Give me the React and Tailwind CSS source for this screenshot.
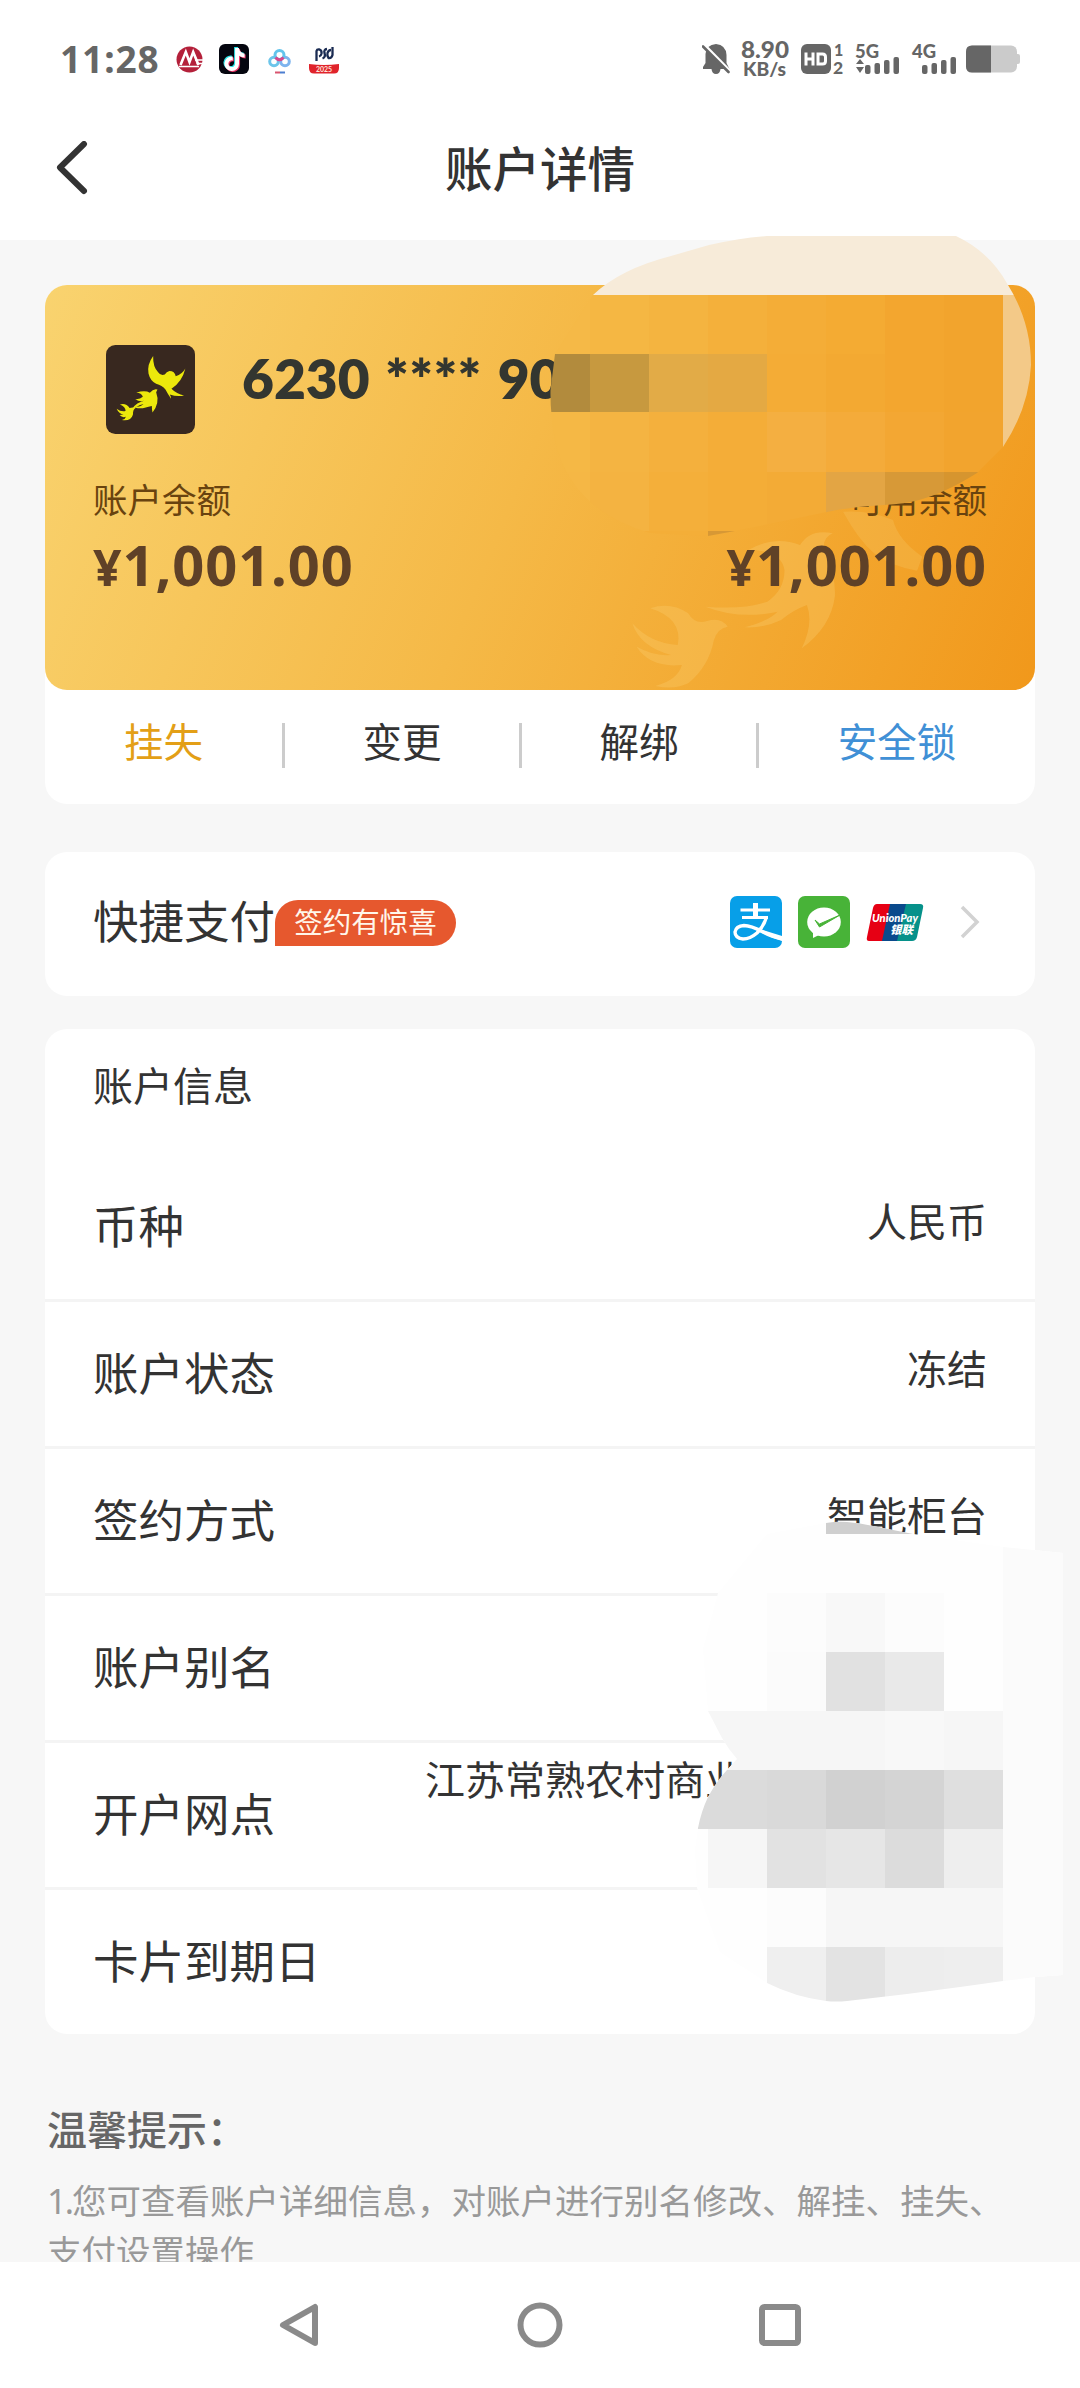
import { FaTiktok } from "react-icons/fa6";

const rows = [
  { label: "币种", value: "人民币" },
  { label: "账户状态", value: "冻结" },
  { label: "签约方式", value: "智能柜台" },
  { label: "账户别名", value: "" },
  { label: "开户网点", value: "江苏常熟农村商业", long: true },
  { label: "卡片到期日", value: "" },
];

// x, y, width, height, colour
const cardTiles = [
  [540, 236, 500, 59, "#f7ebd9"],
  [540, 295, 50, 59, "#f5b947"],
  [590, 295, 59, 59, "#f5b743"],
  [649, 295, 59, 59, "#f4b440"],
  [708, 295, 59, 59, "#f4b03b"],
  [767, 295, 59, 59, "#f4ad37"],
  [826, 295, 59, 59, "#f4ab33"],
  [885, 295, 59, 59, "#f3a62f"],
  [944, 295, 59, 59, "#f2a42d"],
  [540, 354, 50, 58, "#b28b3d"],
  [590, 354, 59, 58, "#c7993f"],
  [649, 354, 59, 58, "#e2ab47"],
  [708, 354, 59, 58, "#e4a943"],
  [767, 354, 59, 58, "#f4ac36"],
  [826, 354, 59, 58, "#f3a932"],
  [885, 354, 59, 58, "#f3a62f"],
  [944, 354, 59, 58, "#f2a42d"],
  [540, 412, 50, 60, "#f5b845"],
  [590, 412, 59, 60, "#f4b442"],
  [649, 412, 59, 60, "#f4b03d"],
  [708, 412, 59, 60, "#f4ad38"],
  [767, 412, 59, 60, "#f4af41"],
  [826, 412, 59, 60, "#f4ab3a"],
  [885, 412, 59, 60, "#f3a733"],
  [944, 412, 59, 60, "#f2a42e"],
  [540, 472, 50, 59, "#f5b745"],
  [590, 472, 59, 59, "#f4b341"],
  [649, 472, 59, 59, "#f4af3a"],
  [708, 472, 59, 59, "#f4ad37"],
  [767, 472, 59, 59, "#f3ab36"],
  [826, 472, 59, 59, "#e3a544"],
  [885, 472, 59, 59, "#d79937"],
  [944, 472, 59, 59, "#d6952f"],
  [640, 531, 68, 6, "#f4ae38"],
  [708, 531, 40, 6, "#d79835"],
  [1003, 295, 40, 160, "#f3c988"],
];

const infoTiles = [
  [690, 1520, 380, 490, "#fefefe"],
  [826, 1520, 100, 14, "#cfcfcf"],
  [767, 1593, 59, 59, "#fcfcfc"],
  [826, 1593, 59, 59, "#f8f8f8"],
  [885, 1593, 59, 59, "#fcfcfc"],
  [767, 1652, 59, 59, "#fbfbfb"],
  [826, 1652, 59, 59, "#e1e1e1"],
  [885, 1652, 59, 59, "#e9e9e9"],
  [690, 1711, 313, 59, "#f6f6f6"],
  [885, 1711, 59, 59, "#f8f8f8"],
  [690, 1770, 77, 59, "#dbdbdb"],
  [767, 1770, 59, 59, "#d9d9d9"],
  [826, 1770, 59, 59, "#d1d1d1"],
  [885, 1770, 59, 59, "#d4d4d4"],
  [944, 1770, 59, 59, "#dfdfdf"],
  [708, 1829, 59, 59, "#f6f6f6"],
  [767, 1829, 59, 59, "#e2e2e2"],
  [826, 1829, 59, 59, "#e6e6e6"],
  [885, 1829, 59, 59, "#dcdcdc"],
  [944, 1829, 59, 59, "#eeeeee"],
  [767, 1888, 59, 59, "#fcfcfc"],
  [826, 1888, 177, 59, "#f6f6f6"],
  [767, 1947, 59, 60, "#efefef"],
  [826, 1947, 59, 60, "#e3e3e3"],
  [885, 1947, 59, 60, "#ededed"],
  [944, 1947, 59, 60, "#eeeeee"],
  [1003, 1530, 60, 470, "#fbfbfb"],
];

function Tiles({ tiles }) {
  return tiles.map(([x, y, w, h, fill]) => (
    <rect key={`${x}-${y}-${w}`} x={x} y={y} width={w} height={h} fill={fill} />
  ));
}

function Redactions() {
  return (
    <svg
      className="pointer-events-none absolute top-0 left-0"
      width="1080"
      height="2388"
      viewBox="0 0 1080 2388"
      shapeRendering="crispEdges"
    >
      <clipPath id="cardBlob">
        <path d="M593 295 Q620 269 671 256 L709 245 Q740 238 767 236 H956 Q990 252 1008 285 Q1031 322 1031 365 Q1029 408 1003 447 L977 473 Q945 493 919 500 Q905 504 884 505 Q850 507 827 512 Q780 522 735 531 L708 536 L650 533 Q570 510 555 440 Q550 412 550.500 390 L555 354 Z" />
      </clipPath>
      <g clipPath="url(#cardBlob)">
        <Tiles tiles={cardTiles} />
      </g>
      <clipPath id="infoBlob">
        <path d="M767 1534 L826 1523 Q838 1521 847 1522 Q860 1523 873 1526 L913 1534 L1003 1547 L1063 1553 V1975 L1035 1977 L1003 1981 L960 1987 L907 1994 L847 2001 Q836 2002 826 2001 Q795 1997 767 1983 L720 1952 L697 1888 L695 1850 L698 1828 Q701 1812 708 1797 Q716 1782 727 1770 L737 1759 Q729 1750 722 1738 L708 1711 L703 1649 L718 1593 Z" />
      </clipPath>
      <g clipPath="url(#infoBlob)">
        <Tiles tiles={infoTiles} />
      </g>
    </svg>
  );
}

function Signal({ label, data }) {
  return (
    <svg className="overflow-visible" width="46" height="34" viewBox="0 0 46 34" fill="#666">
      <text x="0" y="15.500" fontSize="18.500" fontWeight="900" fontFamily="Lato, sans-serif" textLength="24" lengthAdjust="spacingAndGlyphs">
        {label}
      </text>
      {data && <path d="M1 22 L5 17 L9 22 Z M1 25 L5 31 L9 25 Z" />}
      <rect x="10" y="23" width="5.500" height="9" rx="2" />
      <rect x="19.500" y="21" width="5.500" height="11" rx="2" />
      <rect x="29" y="18" width="5.500" height="14" rx="2" />
      <rect x="38.500" y="15" width="5.500" height="17" rx="2" />
    </svg>
  );
}

function StatusBar() {
  return (
    <div className="flex h-[118px] items-center justify-between pr-[60px] pl-[60px]">
      <div className="flex items-center">
        <span className="w-[116px] font-['Noto_Sans'] text-[37px] leading-[40px] font-bold tracking-[0.9px] whitespace-nowrap text-[#666]">
          11:28
        </span>
        <svg className="h-[27px] w-[27px]" viewBox="0 0 27 27">
          <circle cx="13.500" cy="13.500" r="13" fill="#b4203a" />
          <path d="M4.500 19 L9.800 6 L13.500 16 L17.200 6 L22.500 19" fill="none" stroke="#fff" strokeWidth="2.600" />
          <path d="M3 20.500 H23 M19 14 H27 M20.500 17.500 H27" stroke="#fff" strokeWidth="1.500" />
        </svg>
        <div className="relative ml-[16px] h-[30px] w-[30px] rounded-[6px] bg-[#05060f]">
          <FaTiktok className="absolute top-[3px] left-[3px] h-[23px] w-[23px] text-[#2de2e6]" />
          <FaTiktok className="absolute top-[5px] left-[5px] h-[23px] w-[23px] text-[#f0386b]" />
          <FaTiktok className="absolute top-[4px] left-[4px] h-[23px] w-[23px] text-white" />
        </div>
        <svg className="ml-[19px] h-[30px] w-[23px]" viewBox="0 0 23 30" fill="none" strokeWidth="3">
          <circle cx="6" cy="17.500" r="4.300" stroke="#6cc5ea" />
          <circle cx="17" cy="17.500" r="4.300" stroke="#7db4ee" />
          <circle cx="11.500" cy="11" r="4.500" stroke="#62c4ec" />
          <path d="M7.500 13.500 Q11.500 18 15.500 13.500" stroke="#d8478c" />
          <path d="M7 28.500 H12" stroke="#d8556f" strokeWidth="2" />
          <path d="M12 28.500 H17" stroke="#4c7ed0" strokeWidth="2" />
        </svg>
        <svg className="ml-[18px] h-[30px] w-[30px]" viewBox="0 0 30 30">
          <path
            d="M7.500 17 V7 Q8 5 10.500 5.500 Q13 6.500 12.500 9.500 Q12 12 10 12.500 M18 5 Q14.500 5.500 15.500 9 Q17 13 13.500 14.500 M23.500 3 V11 Q22.500 14.500 19.500 14 Q17.800 12 18.500 9 Q19.500 6 22 6"
            fill="none"
            stroke="#1a2b52"
            strokeWidth="2.300"
          />
          <path d="M0 20 Q15 22 30 20 V24 Q30 29.500 25 29.500 H5 Q0 29.500 0 24 Z" fill="#e0232b" />
          <text x="15" y="28" fontSize="7" fontWeight="700" textAnchor="middle" fill="#ffe3dc" fontFamily="Lato, sans-serif">
            2025
          </text>
        </svg>
      </div>

      <div className="flex items-center">
        <svg className="h-[32px] w-[29px]" viewBox="0 0 29 32">
          <path
            d="M14 1 Q24 2 24.500 12 V20 L27.500 26 H18.500 Q18 31 14 31 Q10 31 9.500 26 H1 V24 L3.500 20 V11 Q4 2 14 1 Z"
            fill="#666"
          />
          <path d="M3 2.500 L28 28" stroke="#fff" strokeWidth="3" />
          <path d="M1 3.500 L26.500 29" stroke="#666" strokeWidth="2.600" strokeLinecap="round" />
        </svg>
        <svg className="ml-[9px] h-[40px] w-[50px] overflow-visible" viewBox="0 0 50 40" fill="#666" fontFamily="Lato, sans-serif" fontWeight="900">
          <text x="1" y="18.500" fontSize="22.500" textLength="48" lengthAdjust="spacingAndGlyphs">
            8.90
          </text>
          <text x="3" y="37" fontSize="18.500" textLength="43" lengthAdjust="spacingAndGlyphs">
            KB/s
          </text>
        </svg>
        <svg className="ml-[11px] h-[32px] w-[43px] overflow-visible" viewBox="0 0 43 32">
          <rect x="0" y="1" width="30" height="30" rx="6" fill="#666" />
          <path d="M5 9.500 V22.500 M12 9.500 V22.500 M5 16 H12" stroke="#fff" strokeWidth="3" />
          <path d="M17 11 H21.500 Q24.500 11 24.500 14 V18 Q24.500 21 21.500 21 H17 Z" fill="none" stroke="#fff" strokeWidth="3" />
          <text x="33" y="12.500" fontSize="16" fontWeight="900" fill="#666" fontFamily="Lato, sans-serif">
            1
          </text>
          <text x="32" y="31" fontSize="17.500" fontWeight="900" fill="#666" fontFamily="Lato, sans-serif">
            2
          </text>
        </svg>
        <div className="ml-[11px] flex gap-[11px]">
          <Signal label="5G" data />
          <Signal label="4G" />
        </div>
        <svg className="ml-[8px] h-[28px] w-[54px]" viewBox="0 0 54 28">
          <rect x="0" y="0.500" width="51" height="27" rx="6" fill="#cbcbcb" />
          <rect x="49" y="9" width="5" height="10" rx="2" fill="#cbcbcb" />
          <path d="M6 0.500 H25 V27.500 H6 Q0 27.500 0 21.500 V6.500 Q0 0.500 6 0.500 Z" fill="#666" />
        </svg>
      </div>
    </div>
  );
}

function TitleBar() {
  return (
    <div className="grid h-[122px] grid-cols-3 items-center px-[56px] pb-[20px]">
      <svg className="h-[56px] w-[34px]" viewBox="0 0 34 56" fill="none" stroke="#333" strokeWidth="6" strokeLinecap="round" strokeLinejoin="round">
        <path d="M28 3 L4 26.500 L28 50" />
      </svg>
      <h1 className="text-center text-[47.500px] leading-[60px] font-medium text-[#333]">账户详情</h1>
    </div>
  );
}

function BankLogo() {
  return (
    <svg className="h-[89px] w-[89px]" viewBox="17 16 268 268">
      <rect x="17" y="16" width="268" height="268" rx="28" fill="#38281f" />
      <g fill="#ece80c">
        <path d="M159 49 Q140 75 145 102 Q150 124 168 133 Q186 138 196 150 Q204 165 213 178 Q213 170 209 165 Q232 173 252 168 Q230 164 214 148 Q246 128 256 87 Q246 105 227 110 Q224 94 208 94 Q199 96 194 105 Q182 110 174 98 Q158 82 159 49 Z" />
        <path d="M108 160 Q134 151 149 160 Q160 146 172 150 L168 158 Q180 190 157 219 Q155 210 155 200 Q140 203 134 205 Q120 209 104 204 Q122 202 130 194 Q118 195 104 206 L98 206 Q108 190 132 184 Q118 188 105 179 Q120 180 128 172 Q124 160 108 160 Z" />
        <path d="M59 195 Q78 190 88 206 Q98 202 106 206 Q98 210 98 226 Q92 246 65 242 Q75 240 77 232 Q66 236 58 227 Q66 226 70 225 Q56 224 49 208 Q62 218 76 215 Q76 202 59 195 Z" />
      </g>
    </svg>
  );
}

function BirdWatermark() {
  return (
    <svg className="absolute right-0 bottom-0 h-[200px] w-[445px]" viewBox="590 490 445 200">
      <g transform="translate(540 220) scale(0.3444 0.3333)" fill="#f9c968" fillOpacity="0.36">
        <path d="M320 1165 Q380 1145 430 1180 Q450 1215 485 1203 Q525 1190 545 1220 Q515 1225 505 1260 Q490 1340 430 1390 Q390 1410 335 1398 Q400 1380 412 1335 Q320 1345 280 1280 Q330 1310 380 1305 Q290 1280 268 1210 Q320 1270 400 1275 Q415 1195 320 1165 Z" />
        <path d="M605 990 Q680 945 755 975 Q785 925 850 940 Q815 955 828 1000 Q860 1070 856 1130 Q845 1220 760 1285 Q795 1210 775 1155 Q735 1170 700 1200 Q650 1225 595 1222 Q660 1205 690 1175 Q580 1200 480 1160 Q590 1170 660 1145 Q710 1110 710 1050 Q700 990 605 990 Z" />
        <path fillOpacity="0.28" d="M880 875 Q960 870 1025 900 Q1040 960 1110 1010 L1095 1052 Q1020 1040 970 1000 Q925 960 880 875 Z" />
      </g>
    </svg>
  );
}

function Balance({ label, amount, className = "" }) {
  return (
    <div className={className}>
      <p className="text-[34.500px] leading-[46px] text-[#69430f]">{label}</p>
      <p className="mt-[9px] font-['Noto_Sans'] text-[56px] leading-[64px] font-bold tracking-[0.9px] text-[#5f4127]">
        <span className="text-[50px]">¥</span>
        {amount}
      </p>
    </div>
  );
}

function AccountCard() {
  return (
    <section className="rounded-[22px] bg-white">
      <div className="relative h-[405px] overflow-hidden rounded-[22px] bg-[linear-gradient(112deg,#f9d36f_0%,#f5b947_48%,#f1981b_100%)] px-[48px]">
        <BirdWatermark />
        <div className="relative flex pt-[60px] pl-[13px]">
          <BankLogo />
          <p className="ml-[47px] pt-[3px] font-['Lato'] text-[55px] leading-[60px] font-extrabold whitespace-nowrap text-[#333630] [word-spacing:3px]">
            6230 <span className="tracking-[0.8px]">****</span> 90
          </p>
        </div>
        <div className="relative flex justify-between pt-[43px]">
          <Balance label="账户余额" amount="1,001.00" />
          <Balance label="可用余额" amount="1,001.00" className="text-right" />
        </div>
      </div>
      <div className="flex h-[114px] items-center pb-[4px] text-[39.500px] leading-[50px] text-[#333]">
        <button className="w-[237px] pb-[7px] text-[#e39f17]">挂失</button>
        <span className="h-[45px] w-[3px] bg-[#ccc]" />
        <button className="w-[234px] pb-[7px]">变更</button>
        <span className="h-[45px] w-[3px] bg-[#ccc]" />
        <button className="w-[234px] pb-[7px]">解绑</button>
        <span className="h-[45px] w-[3px] bg-[#ccc]" />
        <button className="flex-1 pb-[7px] text-[#4090d6]">安全锁</button>
      </div>
    </section>
  );
}

function AlipayIcon() {
  return (
    <svg className="h-[52px] w-[52px]" viewBox="0 0 52 52" fill="none" stroke="#fff">
      <rect width="52" height="52" rx="7" fill="#079fe8" stroke="none" />
      <path d="M25.500 7 V22" strokeWidth="5" />
      <path d="M10.500 14 H40 M12 21.500 H38" strokeWidth="3.200" />
      <path d="M36.500 21 Q34 30 27 37 Q20 43 13 43 Q5 42 5 36 Q6 30 14 29.500 Q21 29.500 33 36 Q42 41 53 43" strokeWidth="3.400" />
      <path d="M31 33.500 L52 40 V45 Q42 42 30 36 Z" fill="#fff" stroke="none" />
    </svg>
  );
}

function WechatPayIcon() {
  return (
    <svg className="h-[52px] w-[52px]" viewBox="0 0 52 52">
      <rect width="52" height="52" rx="7" fill="#48b338" />
      <ellipse cx="26" cy="26" rx="16.800" ry="14.500" fill="#fff" />
      <path d="M15 34 L15 42 L23 38 Z" fill="#fff" />
      <path d="M17 24 L21.500 28 L42 19 L21.500 31 Z" fill="#48b338" stroke="#48b338" strokeLinejoin="round" />
    </svg>
  );
}

function UnionPayIcon() {
  return (
    <svg className="h-[37px] w-[58px]" viewBox="0 0 58 37">
      <path d="M11 0 H25 L17 37 H3 Q0 37 1 33 L7 4 Q8 0 11 0 Z" fill="#e60014" />
      <path d="M24 0 H41 L33 37 H16 Z" fill="#0a4a8c" />
      <path d="M40 0 H54 Q58 0 57 4 L51 33 Q50 37 46 37 H31 Z" fill="#06918a" />
      <text x="6" y="18" fontSize="12" fontStyle="italic" fontWeight="900" fill="#fff" fontFamily="Lato, sans-serif" textLength="46" lengthAdjust="spacingAndGlyphs">
        UnionPay
      </text>
      <text x="24" y="30" fontSize="11.500" fontStyle="italic" fontWeight="900" fill="#fff" fontFamily="'Noto Sans CJK SC', sans-serif">
        银联
      </text>
    </svg>
  );
}

function QuickPay() {
  return (
    <section className="mt-[48px] flex h-[144px] items-center justify-between rounded-[22px] bg-white pr-[55px] pl-[48px]">
      <div className="flex items-center pb-[2px]">
        <span className="pb-[5px] text-[45.500px] leading-[60px] text-[#333]">快捷支付</span>
        <span className="flex h-[46px] w-[181px] items-center justify-center rounded-[23px] rounded-bl-none bg-[#e6582e] pb-[1px] text-[28.500px] text-[#fff6ea]">
          签约有惊喜
        </span>
      </div>
      <div className="flex items-center pb-[4px]">
        <div className="flex items-center gap-[16px]">
          <AlipayIcon />
          <WechatPayIcon />
          <UnionPayIcon />
        </div>
        <svg className="ml-[36px] h-[34px] w-[20px]" viewBox="0 0 20 34" fill="none" stroke="#d2d2d2" strokeWidth="3.500">
          <path d="M2 2 L17 17 L2 32" />
        </svg>
      </div>
    </section>
  );
}

function AccountInfo() {
  return (
    <section className="mt-[33px] rounded-[22px] bg-white pt-[32px]">
      <h2 className="px-[48px] text-[40px] leading-[50px] text-[#333]">账户信息</h2>
      <ul className="mt-[44px] divide-y-[3px] divide-[#f4f4f4]">
        {rows.map((row) => (
          <li key={row.label} className="flex h-[147px] justify-between px-[48px] text-[#333] last:h-[144px]">
            <span className="text-[45.500px] leading-[142px]">{row.label}</span>
            {row.long ? (
              <span className="w-[562px] pt-[12px] text-[40px] leading-[50px]">{row.value}</span>
            ) : (
              <span className="text-[40px] leading-[133px]">{row.value}</span>
            )}
          </li>
        ))}
      </ul>
    </section>
  );
}

function Tips() {
  return (
    <section className="mt-[71px] px-[2px]">
      <h3 className="text-[40px] leading-[50px] font-medium text-[#666]">温馨提示：</h3>
      <p className="mt-[20px] text-[34.500px] leading-[51px] text-[#999]">
        <span className="tracking-[-2px]">1.</span>您可查看账户详细信息，对账户进行别名修改、解挂、挂失、支付设置操作
      </p>
    </section>
  );
}

function NavBar() {
  return (
    <nav className="flex h-[126px] items-center justify-between bg-white px-[276px]">
      <svg className="h-[50px] w-[48px]" viewBox="0 0 48 50" fill="none" stroke="#8a8a8a" strokeWidth="6" strokeLinejoin="round">
        <path d="M39 7 V43 L7 25 Z" />
      </svg>
      <svg className="h-[50px] w-[48px]" viewBox="0 0 48 50" fill="none" stroke="#8a8a8a" strokeWidth="6">
        <circle cx="24" cy="25" r="19.500" />
      </svg>
      <svg className="h-[50px] w-[48px]" viewBox="0 0 48 50" fill="none" stroke="#8a8a8a" strokeWidth="6">
        <rect x="6" y="7" width="36" height="36" rx="2.500" />
      </svg>
    </nav>
  );
}

export default function App() {
  return (
    <div className="relative flex h-[2388px] w-[1080px] flex-col overflow-hidden bg-[#f7f7f7] font-['Noto_Sans','Noto_Sans_CJK_SC',sans-serif]">
      <header className="bg-white">
        <StatusBar />
        <TitleBar />
      </header>
      <main className="min-h-0 flex-1 overflow-hidden px-[45px] pt-[45px]">
        <AccountCard />
        <QuickPay />
        <AccountInfo />
        <Tips />
      </main>
      <NavBar />
      <Redactions />
    </div>
  );
}
